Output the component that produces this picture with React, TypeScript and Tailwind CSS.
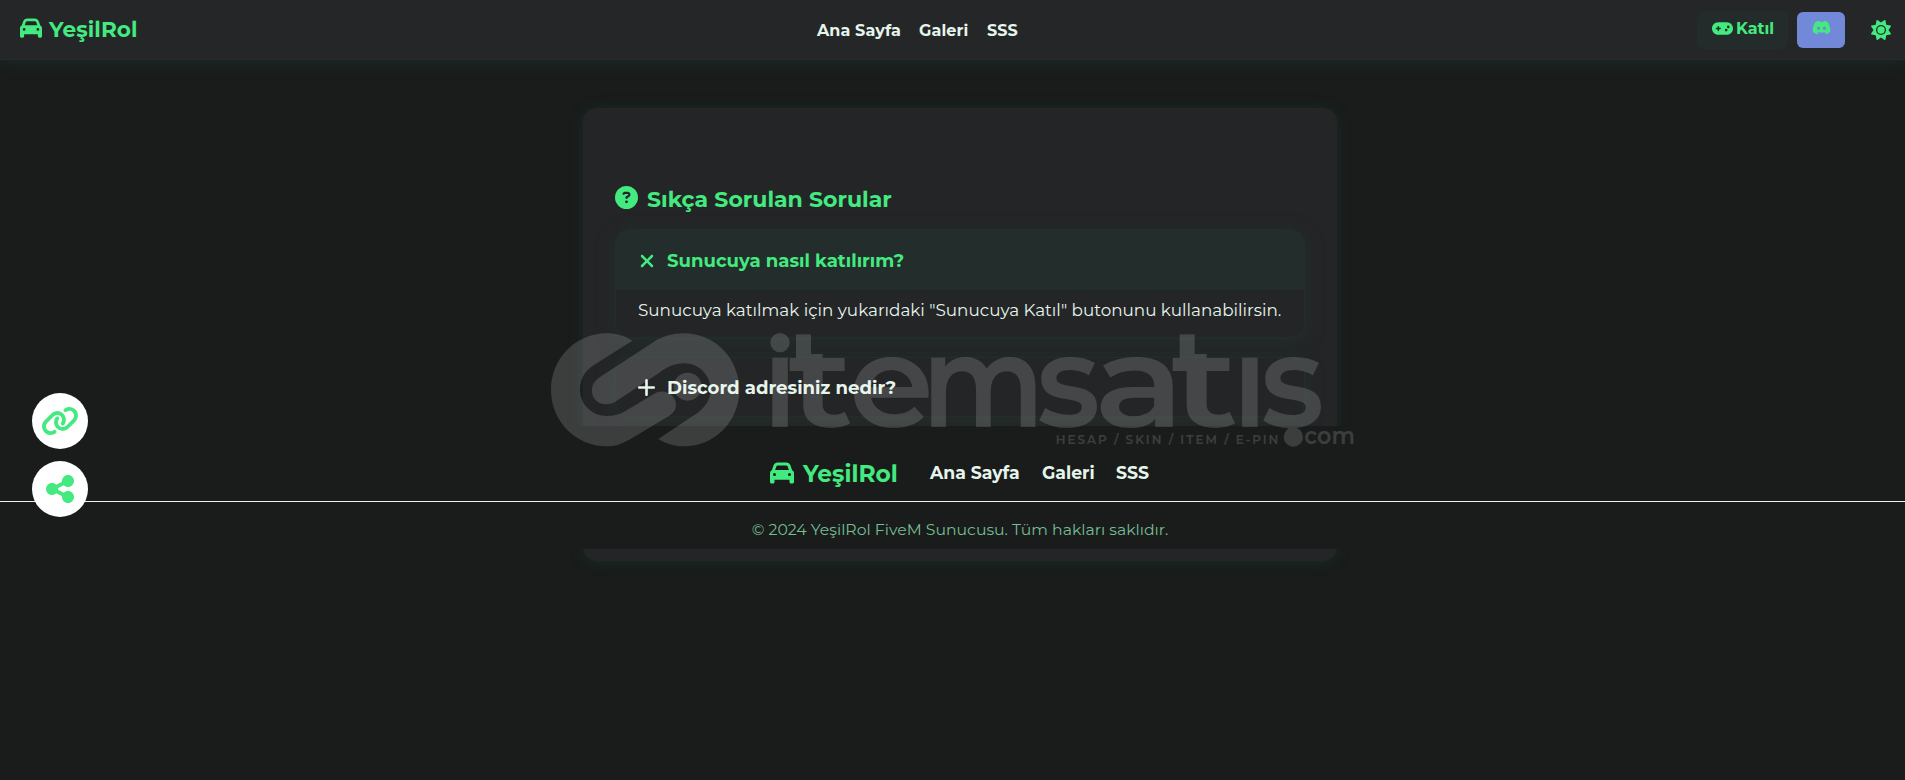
import { FaCar, FaCircleQuestion, FaDiscord, FaGamepad, FaLink, FaPlus, FaShareNodes, FaSun, FaXmark } from "react-icons/fa6";

// x and advance of every letter of the wordmark, in viewBox units
const wordmark = [
  { char: "i", x: 667, width: 107 },
  { char: "t", x: 744, width: 196 },
  { char: "e", x: 926, width: 255 },
  { char: "m", x: 1145, width: 368 },
  { char: "s", x: 1490, width: 190 },
  { char: "a", x: 1663, width: 270 },
  { char: "t", x: 1893, width: 202 },
  { char: "ı", x: 2076, width: 107 },
  { char: "ş", x: 2162, width: 190 },
];

function Header() {
  return (
    <header className="relative z-10 h-[60px] bg-[#242628] border-b border-[#232d2a] shadow-[0_2px_16px_rgba(30,80,60,0.3)] flex items-center pl-[20px] pr-[14px]">
      <a className="flex items-center w-[797px] text-[#43ea7f]">
        <FaCar className="w-[22px] h-[22px] mr-[7px] -mt-[3px]" />
        <span className="text-[21.6px] font-bold leading-[28px] tracking-[0.1px] -mt-[1px]">YeşilRol</span>
      </a>
      <nav className="flex text-[16px] font-bold leading-[20px] text-[#e6f5ec] pt-[2px] tracking-[0.1px]">
        <a className="w-[102px]">Ana Sayfa</a>
        <a className="w-[68px]">Galeri</a>
        <a className="w-[34px]">SSS</a>
      </nav>
      <div className="ml-auto flex items-center text-[#43ea7f]">
        <button className="w-[91px] h-[38px] rounded-[7px] bg-[#232c2b] flex items-center pl-[15px] pb-[3px] mr-[9px]">
          <FaGamepad className="w-[21px] h-[17px] mr-[3px]" />
          <span className="text-[16px] font-bold leading-[20px] pt-[1px]">Katıl</span>
        </button>
        <button className="w-[48px] h-[36px] rounded-[6px] bg-[#7289da] flex items-center justify-center pb-[4px] pl-[1px] mr-[26px]">
          <FaDiscord className="w-[19px] h-[19px]" />
        </button>
        <FaSun className="w-[20px] h-[20px]" />
      </div>
    </header>
  );
}

function Faq() {
  return (
    <main className="ml-[583px] mt-[48px] w-[754px] h-[453px] rounded-[14px] bg-[#242527] shadow-[0_1px_13px_rgba(24,60,46,0.5)] px-[32px] pt-[75px]">
      <h2 className="flex items-center h-[32px] text-[#43ea7f] mb-[14px]">
        <FaCircleQuestion className="w-[23px] h-[23px] mr-[9px] -mt-[3px]" />
        <span className="text-[22px] font-bold">Sıkça Sorulan Sorular</span>
      </h2>

      <section className="relative h-[109px] rounded-[14px] border border-[#232d2b] bg-[#242527] shadow-[0_4px_16px_2px_#232d2a] mb-[19px] overflow-hidden">
        <h3 className="h-[60px] bg-[#232d2b] text-[#43ea7f] flex items-center pl-[22px] pt-[1px]">
          <FaXmark className="w-[20px] h-[20px] mr-[10px] -ml-px" />
          <span className="text-[18.1px] font-bold">Sunucuya nasıl katılırım?</span>
        </h3>
        <p className="pl-[22px] pt-[8px] text-[16.8px] leading-[24px] text-[#e6f5ec] whitespace-nowrap">
          Sunucuya katılmak için yukarıdaki "Sunucuya Katıl" butonunu kullanabilirsin.
        </p>
      </section>

      <section className="relative h-[60px] rounded-[14px] border border-[#232d2b] bg-[#242527] shadow-[0_4px_16px_2px_#232d2a] text-[#e6f5ec] flex items-center pl-[22px] pt-[1px]">
        <FaPlus className="w-[21px] h-[21px] mr-[10px] -ml-[2px]" />
        <span className="text-[18.1px] font-bold">Discord adresiniz nedir?</span>
      </section>
    </main>
  );
}

function Footer() {
  return (
    <footer className="relative -mt-[135px] w-[1920px] h-[123px] bg-[#191c1b]">
      <div className="h-[76px] border-b border-[#e6f5ec] flex justify-center items-center pt-[20px]">
        <div className="flex items-center w-[160px] text-[#43ea7f]">
          <FaCar className="w-[24px] h-[24px] mr-[9px] -mt-[1px]" />
          <span className="text-[23.3px] font-bold leading-[28px]">YeşilRol</span>
        </div>
        <nav className="flex text-[17.3px] font-bold leading-[20px] text-[#e6f5ec] pb-[1px]">
          <a className="w-[112px]">Ana Sayfa</a>
          <a className="w-[74px]">Galeri</a>
          <a className="w-[34px]">SSS</a>
        </nav>
      </div>
      <p className="pt-[16px] text-center text-[15.68px] leading-[24px] text-[#76bd95]">
        © 2024 YeşilRol FiveM Sunucusu. Tüm hakları saklıdır.
      </p>
    </footer>
  );
}

function Watermark() {
  return (
    <svg
      className="absolute left-[540px] top-[310px] w-[830px] h-[160px] pointer-events-none z-20"
      viewBox="0 0 2490 480"
      fill="#fff"
      opacity="0.15"
    >
      <clipPath id="letter-band">
        <rect x="600" y="132" width="1890" height="225" />
      </clipPath>
      <path d="M277 92C255 78 228 70 200 70C108 70 33 145 33 240C33 334 108 409 200 409C232 409 254 397 278 383L385 319C399 310 408 300 408 284C408 256 380 237 351 247L260 301C240 314 222 318 200 318C156 318 120 283 120 240C120 204 135 182 163 164Z" />
      <path d="M355 387C379 402 404 409 432 409C524 409 598 334 598 240C598 145 524 70 432 70C398 70 370 78 342 95L180 201C163 213 156 224 156 242C156 269 180 287 207 282C218 280 225 275 235 269L358 188C381 171 404 160 432 160C477 160 512 196 512 240C512 268 496 291 472 309Z" />
      <circle cx="443" cy="230" r="42" />

      {/* Wordmark: round dots and tall t stems sit outside the letter band */}
      <circle cx="720" cy="98" r="29" />
      <rect x="768" y="73" width="45" height="75" />
      <rect x="1919" y="73" width="45" height="75" />
      <g clipPath="url(#letter-band)">
        <text y="350" fontSize="390" fontWeight="600">
          {wordmark.map((letter) => (
            <tspan key={letter.x} x={letter.x} textLength={letter.width} lengthAdjust="spacingAndGlyphs">
              {letter.char}
            </tspan>
          ))}
        </text>
      </g>
      <circle cx="2260" cy="381" r="29" />
      <text x="1547" y="403" fontSize="36" fontWeight="600" textLength="668">
        HESAP / SKIN / ITEM / E-PIN
      </text>
      <text x="2293" y="402" fontSize="73" fontWeight="600" textLength="152" lengthAdjust="spacingAndGlyphs">
        com
      </text>
    </svg>
  );
}

export default function App() {
  return (
    <div className="relative h-[780px] overflow-hidden bg-[#191c1b] font-['Montserrat','Inter',sans-serif]">
      <Header />
      <Faq />
      <Footer />
      <Watermark />

      {/* Floating actions */}
      <div className="absolute left-[32px] top-[393px] z-30 flex flex-col gap-[12px] text-[#43ea7f]">
        <button className="w-[56px] h-[56px] rounded-full bg-white flex items-center justify-center">
          <FaLink className="w-[38px] h-[32px]" />
        </button>
        <button className="w-[56px] h-[56px] rounded-full bg-white flex items-center justify-center">
          <FaShareNodes className="w-[32px] h-[32px]" />
        </button>
      </div>
    </div>
  );
}
